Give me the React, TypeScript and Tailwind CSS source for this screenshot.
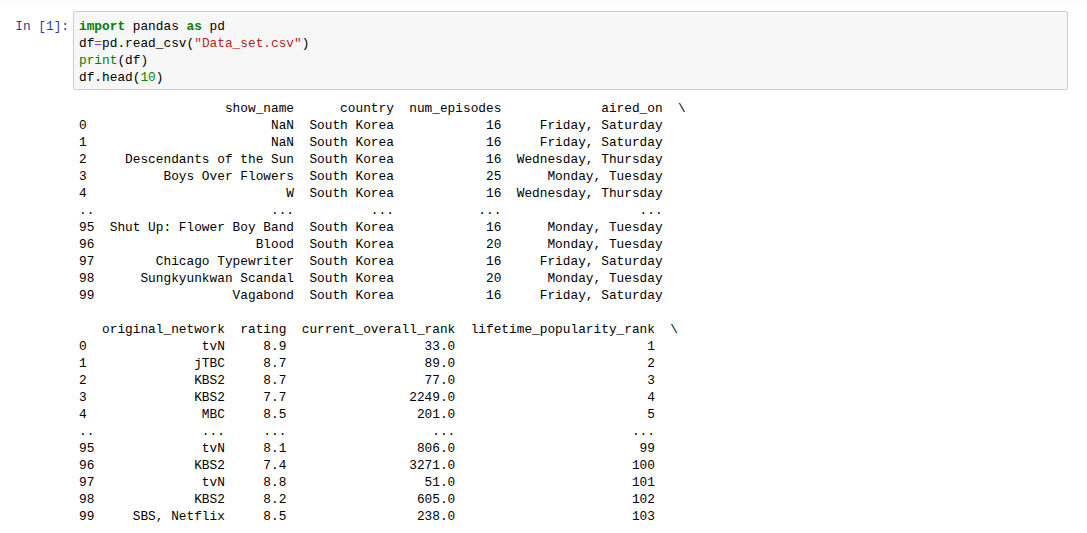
const mono = { fontFamily: '"Liberation Mono", "DejaVu Sans Mono", monospace' };

type Row = string[];

function fmt(idx: string, cells: string[], widths: number[], tail = '') {
  return idx.padEnd(2) + cells.map((c, i) => ' ' + c.padStart(widths[i])).join('') + tail;
}

const widths1 = [25, 12, 13, 20];
const rows1: Row[] = [
  ['0', 'NaN', 'South Korea', '16', 'Friday, Saturday'],
  ['1', 'NaN', 'South Korea', '16', 'Friday, Saturday'],
  ['2', 'Descendants of the Sun', 'South Korea', '16', 'Wednesday, Thursday'],
  ['3', 'Boys Over Flowers', 'South Korea', '25', 'Monday, Tuesday'],
  ['4', 'W', 'South Korea', '16', 'Wednesday, Thursday'],
  ['..', '...', '...', '...', '...'],
  ['95', 'Shut Up: Flower Boy Band', 'South Korea', '16', 'Monday, Tuesday'],
  ['96', 'Blood', 'South Korea', '20', 'Monday, Tuesday'],
  ['97', 'Chicago Typewriter', 'South Korea', '16', 'Friday, Saturday'],
  ['98', 'Sungkyunkwan Scandal', 'South Korea', '20', 'Monday, Tuesday'],
  ['99', 'Vagabond', 'South Korea', '16', 'Friday, Saturday'],
];

const widths2 = [16, 7, 21, 25];
const rows2: Row[] = [
  ['0', 'tvN', '8.9', '33.0', '1'],
  ['1', 'jTBC', '8.7', '89.0', '2'],
  ['2', 'KBS2', '8.7', '77.0', '3'],
  ['3', 'KBS2', '7.7', '2249.0', '4'],
  ['4', 'MBC', '8.5', '201.0', '5'],
  ['..', '...', '...', '...', '...'],
  ['95', 'tvN', '8.1', '806.0', '99'],
  ['96', 'KBS2', '7.4', '3271.0', '100'],
  ['97', 'tvN', '8.8', '51.0', '101'],
  ['98', 'KBS2', '8.2', '605.0', '102'],
  ['99', 'SBS, Netflix', '8.5', '238.0', '103'],
];

const output = [
  fmt('', ['show_name', 'country', 'num_episodes', 'aired_on'], widths1, '  \\'),
  ...rows1.map((r) => fmt(r[0], r.slice(1), widths1)),
  '',
  fmt('', ['original_network', 'rating', 'current_overall_rank', 'lifetime_popularity_rank'], widths2, '  \\'),
  ...rows2.map((r) => fmt(r[0], r.slice(1), widths2)),
].join('\n');

export default function App() {
  return (
    <div className="h-[533px] w-full overflow-hidden bg-white" style={mono}>
      <div className="h-[3px] bg-[#fafafa]" />
      <div className="flex pt-[8px]">
        <div className="w-[73px] shrink-0 pr-[4px] pt-[7px] text-right text-[12.8px] leading-[17px] text-[#303f9f]">
          In [1]:
        </div>
        <div className="mr-[19px] flex-1 rounded-[2px] border border-[#cfcfcf] bg-[#f7f7f7] pb-[3px] pl-[5px] pt-[6px]">
          <pre className="text-[12.8px] leading-[17px] text-black" style={mono}>
            <span className="font-bold text-[#008000]">import</span> pandas <span className="font-bold text-[#008000]">as</span> pd
            {'\n'}df<span className="text-[#aa22ff]">=</span>pd.read_csv(<span className="text-[#ba2121]">"Data_set.csv"</span>)
            {'\n'}<span className="text-[#008000]">print</span>(df)
            {'\n'}df.head(<span className="text-[#008800]">10</span>)
          </pre>
        </div>
      </div>
      <pre className="mt-[10px] pl-[79px] text-[12.8px] leading-[17px] text-black" style={mono}>
        {output}
      </pre>
    </div>
  );
}
